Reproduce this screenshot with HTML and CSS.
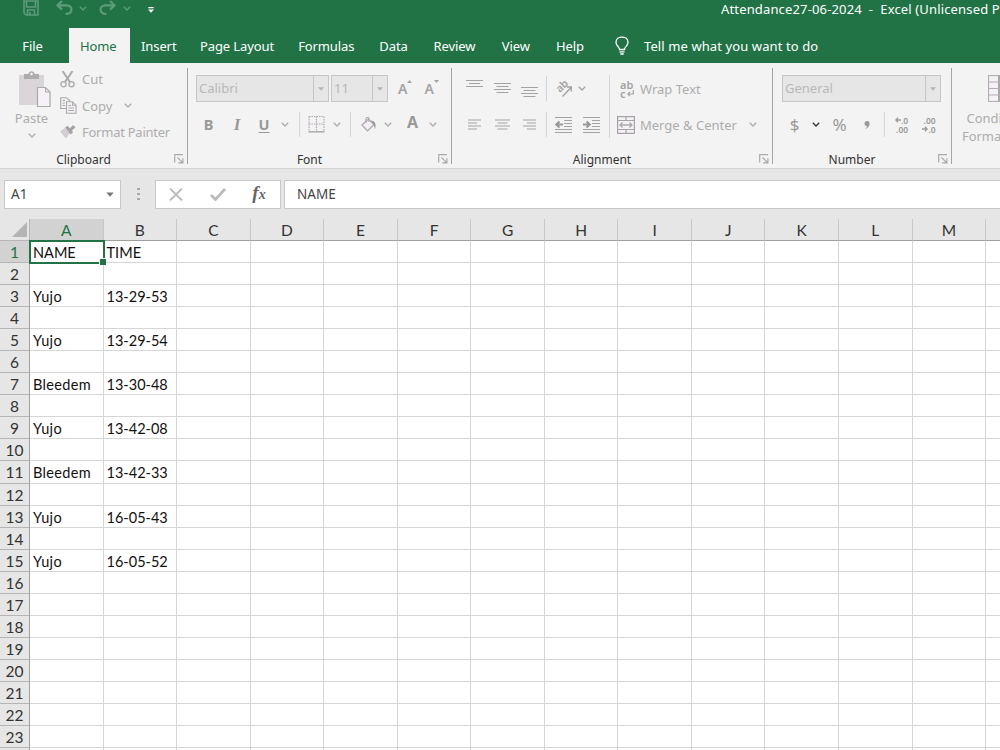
FILE: index.html
```html
<!DOCTYPE html>
<html lang="en">
<head>
    <meta charset="UTF-8">
    <meta name="viewport" content="width=device-width, initial-scale=1.0">
    <title>Attendance27-06-2024 - Excel</title>
    <link rel="stylesheet" href="styles.css">
</head>
<body>

<svg class="defs" width="0" height="0">
    <symbol id="chev" viewBox="0 0 8 5"><path d="M0.8 0.8L4 4L7.2 0.8" fill="none" stroke="currentColor" stroke-width="1.3"/></symbol>
    <symbol id="caret" viewBox="0 0 6 4"><path d="M0 0.3H6L3 3.7Z" fill="currentColor"/></symbol>
    <symbol id="launch" viewBox="0 0 10 10"><path d="M0.7 8.5V0.7H9M3.5 3.5L8.5 8.5M8.9 4.2V8.9H4.2" fill="none" stroke="currentColor" stroke-width="1.2"/></symbol>
</svg>

<header class="titlebar">
    <div class="quick">
        <svg width="16" height="16" viewBox="0 0 16 16"><path d="M1 1H15V15H3L1 13ZM3.5 1V7H12.5V1M4.5 15V10H11.5V15M7 12V15" fill="none" stroke="currentColor" stroke-width="1.6"/></svg>
        <svg width="17" height="16" viewBox="0 0 17 16"><path d="M6 1L1.5 5.3L6 9.6M2 5.3H10.5C17 5.3 17.5 14 9.5 14" fill="none" stroke="currentColor" stroke-width="2.2"/></svg>
        <svg width="8" height="5"><use href="#chev"/></svg>
        <svg width="17" height="16" viewBox="0 0 17 16"><path d="M11 1L15.5 5.3L11 9.6M15 5.3H6.5C-0.5 5.3 0 14 7.5 14" fill="none" stroke="currentColor" stroke-width="2.2"/></svg>
        <svg width="8" height="5"><use href="#chev"/></svg>
        <svg class="more" width="6" height="6" viewBox="0 0 6 6"><path d="M0.3 0H5.7V1.2H0.3ZM0 2.5H6L3 5.8Z" fill="currentColor"/></svg>
    </div>
    <div class="title">Attendance27-06-2024&nbsp; -&nbsp; Excel (Unlicensed Product)</div>
</header>

<nav class="tabs">
    <a class="file">File</a>
    <a class="active">Home</a>
    <a>Insert</a>
    <a>Page Layout</a>
    <a>Formulas</a>
    <a>Data</a>
    <a>Review</a>
    <a>View</a>
    <a>Help</a>
    <svg width="14" height="19" viewBox="0 0 14 19"><path d="M4.5 13.5C4.5 10.5 1 10 1 6.2C1 -0.6 13 -0.6 13 6.2C13 10 9.5 10.5 9.5 13.5ZM4.5 15.8H9.5M5.3 18H8.7" fill="none" stroke="currentColor" stroke-width="1.3"/></svg>
    <span>Tell me what you want to do</span>
</nav>

<section class="ribbon">
    <div class="group clipboard">
        <div class="clip-body">
            <div class="paste">
                <svg width="32" height="37" viewBox="0 0 32 37">
                    <path d="M0 4H25V34H0Z" fill="#d9d5d9"/>
                    <path d="M5 3H9.5C9.5 -0.8 15.5 -0.8 15.5 3H20V8H5Z" fill="#adadad"/>
                    <circle cx="12.5" cy="3" r="1.3" fill="#f3f3f3"/>
                    <path d="M18.5 16.5H26.5L31 21V35.5H18.5Z" fill="#f6f0f7" stroke="#aaa" stroke-width="1.2"/>
                    <path d="M26.5 16.5V21H31" fill="none" stroke="#aaa"/>
                </svg>
                <span>Paste</span>
                <svg width="8" height="5"><use href="#chev"/></svg>
            </div>
            <div class="clip-list">
                <div class="clip-item">
                    <svg width="15" height="17" viewBox="0 0 15 17"><path d="M2.5 0L10.3 11.5M12.5 0L4.7 11.5" stroke="#aaa" stroke-width="2"/><circle cx="3.5" cy="13.3" r="2.6" fill="none" stroke="#aaa" stroke-width="1.3"/><circle cx="11.5" cy="13.3" r="2.6" fill="none" stroke="#aaa" stroke-width="1.3"/></svg>
                    <span>Cut</span>
                </div>
                <div class="clip-item">
                    <svg width="17" height="17" viewBox="0 0 17 17"><path d="M6.5 11.5H0.7V0.7H6.5L9.5 3.5V5M6.5 4.7H12.5L16 8.2V16.3H6.5ZM12.5 4.7V8.2H16M2.5 3.5H5M2.5 6H5M2.5 8.5H5M8.5 8.5H11M8.5 11H14M8.5 13.5H14" fill="#f5f0f6" stroke="#aaa" stroke-width="1.1"/></svg>
                    <span>Copy</span>
                    <svg width="8" height="5"><use href="#chev"/></svg>
                </div>
                <div class="clip-item">
                    <svg width="16" height="14" viewBox="0 0 16 14"><path d="M0 6.5L5 3L9.5 8.5L6 13.5Z" fill="#d3cdd3"/><path d="M5 2.5L7.5 0.8L10 3.2L13 0L15.5 2.3L12 5.5L13 7.5L10.5 9.5Z" fill="#a5a5a5"/></svg>
                    <span class="tight">Format Painter</span>
                </div>
            </div>
        </div>
        <div class="label">Clipboard<svg width="10" height="10"><use href="#launch"/></svg></div>
    </div>
    <div class="divider"></div>

    <div class="group font">
        <div class="font-top">
            <div class="combo"><span>Calibri</span><i><svg width="6" height="4"><use href="#caret"/></svg></i></div>
            <div class="combo"><span>11</span><i><svg width="6" height="4"><use href="#caret"/></svg></i></div>
            <div class="grow">A<svg width="5" height="3" viewBox="0 0 5 3"><path d="M0 3L2.5 0L5 3Z" fill="currentColor"/></svg></div>
            <div class="grow">A<svg width="5" height="3" viewBox="0 0 5 3"><path d="M0 0L2.5 3L5 0Z" fill="currentColor"/></svg></div>
        </div>
        <div class="font-bottom">
            <b>B</b>
            <b class="italic">I</b>
            <b class="underline">U</b>
            <svg width="8" height="5"><use href="#chev"/></svg>
            <div class="line"></div>
            <svg width="17" height="17" viewBox="0 0 17 17"><path d="M1 0.5H16M1 8H16M1 0.5V15M8.5 0.5V15M16 0.5V15" fill="none" stroke="#b5a9b7" stroke-width="1.2" stroke-dasharray="1.5 1"/><path d="M0.5 15.8H16.5" stroke="#aaa" stroke-width="1.5"/></svg>
            <svg width="8" height="5"><use href="#chev"/></svg>
            <div class="line"></div>
            <svg width="16" height="15" viewBox="0 0 16 15"><path d="M1 8L7.5 2L13 7.5L6.5 14Z" fill="#f5eef6" stroke="#aaa" stroke-width="1.2"/><path d="M5 6V2C5 0 8 0 8 2V5" fill="none" stroke="#aaa" stroke-width="1.2"/><path d="M9.5 3.5C14 3.5 15.5 7 14 12.5C13.5 10 13 8 11.5 6Z" fill="#999"/></svg>
            <svg width="8" height="5"><use href="#chev"/></svg>
            <b class="color">A</b>
            <svg width="8" height="5"><use href="#chev"/></svg>
        </div>
        <div class="label">Font<svg width="10" height="10"><use href="#launch"/></svg></div>
    </div>
    <div class="divider"></div>

    <div class="group alignment">
        <div class="align-body">
            <div class="align-row">
                <svg width="17" height="18" viewBox="0 0 17 18"><path d="M0 0.5H17M3 3.5H14M0 6.5H17" stroke="currentColor"/></svg>
                <svg width="17" height="18" viewBox="0 0 17 18"><path d="M0 3.5H17M2.5 6.5H14.5M0 9.5H17M2.5 12.5H14.5" stroke="currentColor"/></svg>
                <svg width="17" height="18" viewBox="0 0 17 18"><path d="M0 7.5H17M2.5 10.5H14.5M0 13.5H17M2.5 16.5H14.5" stroke="currentColor"/></svg>
                <div class="line"></div>
                <svg class="orient" width="18" height="18" viewBox="0 0 18 18"><text x="5" y="13" transform="rotate(-45 5 13)">ab</text><path d="M7.5 16.5L16 7.5M16.3 11.5V7H11.8" fill="none" stroke="currentColor" stroke-width="1.4"/></svg>
                <svg width="8" height="5"><use href="#chev"/></svg>
            </div>
            <div class="line tall"></div>
            <div class="wrap">
                <div class="wrap-icon"><span>ab</span><span>c<svg width="7" height="7" viewBox="0 0 7 7"><path d="M6.3 0V4H1M3 1.8L0.8 4L3 6.2" fill="none" stroke="currentColor" stroke-width="1.2"/></svg></span></div>
                <span>Wrap Text</span>
            </div>
            <div class="align-row">
                <svg width="13" height="11" viewBox="0 0 13 11"><path d="M0 1H13M0 4H9M0 7H13M0 10H9" stroke="currentColor"/></svg>
                <svg width="15" height="11" viewBox="0 0 15 11"><path d="M0 1H15M2.5 4H12.5M0 7H15M2.5 10H12.5" stroke="currentColor"/></svg>
                <svg width="13" height="11" viewBox="0 0 13 11"><path d="M0 1H13M4 4H13M0 7H13M4 10H13" stroke="currentColor"/></svg>
                <div class="line"></div>
                <svg width="17" height="16" viewBox="0 0 17 16"><path d="M0 0.5H17M9 3.5H17M9 6.5H17M9 9.5H17M0 12.5H17M0 15.5H17" stroke="currentColor"/><path d="M8 7.5H1.5M4.5 4.5L1.2 7.5L4.5 10.5" fill="none" stroke="#999" stroke-width="2"/></svg>
                <svg width="17" height="16" viewBox="0 0 17 16"><path d="M0 0.5H17M9 3.5H17M9 6.5H17M9 9.5H17M0 12.5H17M0 15.5H17" stroke="currentColor"/><path d="M0 7.5H6.5M3.5 4.5L6.8 7.5L3.5 10.5" fill="none" stroke="#999" stroke-width="2"/></svg>
            </div>
            <div class="merge">
                <svg width="18" height="18" viewBox="0 0 18 18"><path d="M0.6 0.6H17.4V17.4H0.6ZM0.6 4.5H17.4M0.6 13.5H17.4M9 0.6V4.5M9 13.5V17.4" fill="none" stroke="#aaa0ac" stroke-width="1.2"/><path d="M3 9H15M5.5 6.5L3 9L5.5 11.5M12.5 6.5L15 9L12.5 11.5" fill="none" stroke="#aaa" stroke-width="1.3"/></svg>
                <span>Merge &amp; Center</span>
                <svg width="8" height="5"><use href="#chev"/></svg>
            </div>
        </div>
        <div class="label">Alignment<svg width="10" height="10"><use href="#launch"/></svg></div>
    </div>
    <div class="divider"></div>

    <div class="group number">
        <div class="number-top">
            <div class="combo"><span>General</span><i><svg width="6" height="4"><use href="#caret"/></svg></i></div>
        </div>
        <div class="number-bottom">
            <span class="sign">$</span>
            <svg class="dark" width="8" height="5"><use href="#chev"/></svg>
            <span class="sign">%</span>
            <svg width="6" height="8" viewBox="0 0 6 8"><path d="M3 0A2.5 2.5 0 0 1 5.5 2.8C5.5 5.5 3.5 7.5 1 8C2.2 7 3 6 3 5A2.5 2.5 0 0 1 3 0Z" fill="#999"/></svg>
            <div class="line"></div>
            <div class="decimal"><span><svg width="6" height="6" viewBox="0 0 6 6"><path d="M6 3H1M3 0.8L0.8 3L3 5.2" fill="none" stroke="currentColor" stroke-width="1.3"/></svg>.0</span><span>.00</span></div>
            <div class="decimal"><span>.00</span><span><svg width="6" height="6" viewBox="0 0 6 6"><path d="M0 3H5M3 0.8L5.2 3L3 5.2" fill="none" stroke="currentColor" stroke-width="1.3"/></svg>.0</span></div>
        </div>
        <div class="label">Number<svg width="10" height="10"><use href="#launch"/></svg></div>
    </div>
    <div class="divider"></div>

    <div class="conditional">
        <svg width="26" height="27" viewBox="0 0 26 27"><rect x="0.6" y="0.6" width="24.8" height="25.8" fill="#f6f0f7" stroke="#aaa"/><path d="M10 0.6H18V26.4H10Z" fill="#a8a8a8"/><path d="M0.6 7H25M0.6 13.5H25M0.6 20H25" stroke="#b5adb5"/></svg>
        <span class="first">Conditional</span>
        <span>Formatting</span>
    </div>
</section>

<section class="formula-bar">
    <div class="name-box">A1<svg width="8" height="5" viewBox="0 0 6 4"><use href="#caret"/></svg></div>
    <div class="dots"><i></i><i></i><i></i></div>
    <div class="fx-box">
        <svg width="14" height="13" viewBox="0 0 14 13"><path d="M1 0.5L13 12.5M13 0.5L1 12.5" stroke="#bbb" stroke-width="1.9"/></svg>
        <svg width="16" height="13" viewBox="0 0 16 13"><path d="M1 7L5.5 11.5L15 1" fill="none" stroke="#bbb" stroke-width="2.8"/></svg>
        <span class="fx">f<small>x</small></span>
    </div>
    <div class="formula">NAME</div>
</section>

<main class="sheet" id="sheet"></main>

<script>
    const columns = ['A', 'B', 'C', 'D', 'E', 'F', 'G', 'H', 'I', 'J', 'K', 'L', 'M', ''];
    const rowCount = 24;
    const records = {
        1: ['NAME', 'TIME'],
        3: ['Yujo', '13-29-53'],
        5: ['Yujo', '13-29-54'],
        7: ['Bleedem', '13-30-48'],
        9: ['Yujo', '13-42-08'],
        11: ['Bleedem', '13-42-33'],
        13: ['Yujo', '16-05-43'],
        15: ['Yujo', '16-05-52']
    };
    const sheet = document.getElementById('sheet');

    function addCell(className, text) {
        const cell = document.createElement('div');
        cell.className = className;
        cell.textContent = text || '';
        sheet.appendChild(cell);
    }

    addCell('corner');
    columns.forEach((name, i) => addCell(i === 0 ? 'col-head selected' : 'col-head', name));

    for (let row = 1; row <= rowCount; row++) {
        // the last row only shows its top edge
        addCell(row === 1 ? 'row-head selected' : 'row-head', row < rowCount ? row : '');
        columns.forEach((name, i) => {
            const values = records[row] || [];
            let className = i === 0 ? 'cell name' : 'cell';
            if (row === 1 && i === 0) className = 'cell current';
            addCell(className, values[i]);
        });
    }
</script>

</body>
</html>
```

FILE: styles.css
```css
* {
    box-sizing: border-box;
}
body {
    margin: 0;
    width: 1000px;
    height: 750px;
    overflow: hidden;
    background: #fff;
    font-family: "Noto Sans", "Open Sans", sans-serif;
    font-size: 13px;
    color: #222;
}
svg {
    display: block;
    flex: none;
}
.defs {
    position: absolute;
}

/* title bar and tabs */
.titlebar {
    display: grid;
    grid-template-columns: 721px 279px;
    height: 28px;
    background: #217346;
    color: #fff;
    overflow: hidden;
}
.quick {
    display: grid;
    grid-template-columns: 33px 23px 20px 24px 25px 6px;
    align-items: center;
    height: 15px;
    padding-left: 23px;
    color: #5c9b78;
}
.quick .more {
    color: #fff;
    margin-top: 3px;
}
.title {
    white-space: nowrap;
    line-height: 18px;
    letter-spacing: 0.15px;
    overflow: hidden;
}
.tabs {
    display: grid;
    grid-template-columns: 69px 60.5px 58.5px 98px 80.5px 54px 68px 54.5px 54px 47px 1fr;
    align-items: center;
    height: 35px;
    background: #217346;
    color: #fff;
    white-space: nowrap;
}
.tabs a {
    text-align: center;
    line-height: 36px;
    height: 35px;
    letter-spacing: -0.1px;
}
.tabs .file {
    padding-right: 4px;
}
.tabs .active {
    padding-right: 2px;
    background: #f3f3f3;
    color: #217346;
}
.tabs svg {
    margin-left: 18px;
}
.tabs span {
    letter-spacing: 0.1px;
}

/* ribbon */
.ribbon {
    display: flex;
    height: 105.5px;
    background: #f3f3f3;
    border-bottom: 1px solid #d2d2d2;
    color: #adadad;
    overflow: hidden;
}
.divider {
    flex: none;
    width: 1px;
    margin: 5px 0 4px;
    background: #a5a5a5;
}
.group {
    flex: none;
    display: grid;
    grid-template-rows: 51px 21px 16px 17px;
}
.clipboard {
    width: 187px;
}
.font {
    width: 263px;
}
.alignment {
    width: 320px;
}
.number {
    width: 178px;
}
.label {
    grid-row: 4;
    display: grid;
    grid-template-columns: 1fr 10px;
    align-items: center;
    padding-right: 3px;
    font-size: 12px;
    line-height: 17px;
    text-align: center;
    text-indent: -7px;
    color: #333;
}
.label svg {
    margin-top: -1px;
    color: #aaa;
}
.clip-body {
    grid-row: 1 / 4;
    display: flex;
}
.paste {
    display: flex;
    flex-direction: column;
    align-items: center;
    width: 60px;
    padding-top: 8px;
}
.paste svg:first-child {
    margin-left: 10px;
}
.paste span {
    margin-left: 3px;
    line-height: 20px;
}
.paste svg:last-child {
    margin: 5px 0 0 3px;
}
.clip-list {
    padding-top: 3px;
}
.clip-item {
    display: grid;
    grid-template-columns: 17px auto 8px;
    justify-content: start;
    align-items: center;
    column-gap: 5px;
    height: 26.5px;
    white-space: nowrap;
}
.clip-item > svg:last-child {
    margin-left: 7px;
}
.tight {
    letter-spacing: -0.25px;
}
.combo {
    display: flex;
    justify-content: space-between;
    height: 27px;
    border: 1px solid #c6c6c6;
    background: #e6e6e6;
    line-height: 25px;
    padding-left: 2px;
    color: #b8b8b8;
}
.combo i {
    display: grid;
    place-items: center;
    width: 15px;
    border-left: 1px solid #c6c6c6;
    color: #b4b4b4;
}
.line {
    width: 1px;
    height: 25px;
    margin: -2px 0;
    background: #d5d5d5;
}
.font-top {
    display: grid;
    grid-template-columns: 133px 59px 26.5px 27px;
    align-items: center;
    padding-left: 8px;
}
.font-top .combo:nth-child(2) {
    margin-left: 2px;
}
.grow {
    display: flex;
    padding-left: 10px;
    font-size: 14px;
    font-weight: 600;
    line-height: 18px;
    color: #a3a3a3;
}
.font-bottom {
    display: grid;
    grid-template-columns: 27px 30px 24px 18px 11px 23px 18px 9px 28px 10px 35px 10px;
    grid-template-rows: 21px;
    place-items: center;
    padding-left: 7px;
}
.font-bottom b {
    font-size: 14.5px;
    line-height: 19px;
    padding-bottom: 1px;
    color: #999;
}
.font-bottom .italic {
    font-family: "Liberation Serif", serif;
    font-style: italic;
    font-size: 17px;
}
.font-bottom .underline {
    text-decoration: underline;
    text-underline-offset: 2px;
}
.font-bottom .color {
    padding: 0 0 4px 4px;
    font-size: 16px;
}
.align-body {
    grid-row: 1 / 3;
    display: grid;
    grid-template-columns: 153px 8px 159px;
    grid-template-rows: 51px 21px;
}
.align-row {
    display: grid;
    grid-template-columns: 28px 28px 27px 7px 27px 28px;
    place-items: center;
    padding-left: 8px;
    color: #a3a3a3;
}
.align-row:first-child {
    grid-template-columns: 28px 28px 27px 7px 27px 9px;
    justify-content: start;
}
.tall {
    grid-row: 1 / 3;
    grid-column: 2;
    height: 63px;
    margin: 12px 0 0 4px;
}
.orient {
    overflow: visible;
    font-size: 10.5px;
    font-weight: 600;
    fill: #a3a3a3;
}
.wrap, .merge {
    grid-column: 3;
    display: flex;
    align-items: center;
    white-space: nowrap;
    gap: 5px;
}
.wrap {
    padding-left: 7px;
}
.merge {
    padding-left: 4px;
}
.merge svg:last-child {
    margin-left: 7px;
}
.wrap-icon {
    width: 15px;
    font-size: 11px;
    font-weight: 600;
    line-height: 9px;
    color: #a3a3a3;
}
.wrap-icon span {
    display: flex;
    align-items: center;
    gap: 1px;
}
.number-top {
    padding: 12px 10px 0 9px;
}
.number-bottom {
    display: grid;
    grid-template-columns: 21px 21px 27px 28px 7px 27px 28px;
    grid-template-rows: 21px;
    place-items: center;
    padding-left: 11px;
}
.sign {
    font-size: 17px;
    line-height: 20px;
    color: #999;
}
.dark {
    color: #333;
}
.decimal {
    display: grid;
    justify-items: end;
    font-size: 8.5px;
    font-weight: 600;
    line-height: 9px;
    color: #999;
}
.decimal span {
    display: flex;
    align-items: center;
}
.conditional {
    flex: none;
    display: flex;
    flex-direction: column;
    align-items: center;
    width: 88px;
    padding-top: 12px;
    line-height: 18px;
}
.conditional svg {
    margin: 0 0 7px 9px;
}
.conditional .first {
    margin-left: 11px;
}

/* formula bar */
.formula-bar {
    display: grid;
    grid-template-columns: 117px 34px 126px 1fr;
    height: 50.5px;
    padding: 11.5px 0 10.5px 4px;
    background: #e6e6e6;
    font-size: 13.5px;
    color: #444;
}
.name-box, .fx-box, .formula {
    background: #fff;
    border: 1px solid #c8c8c8;
}
.name-box {
    display: flex;
    justify-content: space-between;
    align-items: center;
    padding: 0 6px;
}
.name-box svg {
    color: #777;
}
.dots {
    display: grid;
    place-content: center;
    gap: 3px;
}
.dots i {
    width: 3px;
    height: 2px;
    background: #aaa;
}
.fx-box {
    display: grid;
    grid-template-columns: 40px 44px 38px;
    place-items: center;
}
.fx {
    font-family: "Liberation Serif", serif;
    font-style: italic;
    font-weight: bold;
    font-size: 19px;
    line-height: 22px;
    color: #666;
}
.fx small {
    font-size: 14px;
}
.formula {
    margin-left: 3px;
    padding-left: 12px;
    line-height: 26px;
    border-right: 0;
}

/* sheet */
.sheet {
    display: grid;
    width: 1000px;
    height: 531px;
    overflow: hidden;
    grid-template-columns: 30px repeat(14, 73.55px);
    grid-template-rows: 22px repeat(24, 22.05px);
    font-family: Lato, sans-serif;
    font-size: 14.5px;
    line-height: 23px;
    color: #111;
}
.corner, .col-head, .row-head {
    background: #e6e6e6;
    border-right: 1px solid #b5b5b5;
    border-bottom: 1px solid #b5b5b5;
    text-align: center;
}
.corner::after {
    content: "";
    display: block;
    width: 15px;
    height: 15px;
    margin: 3px 0 0 12px;
    background: #b4b4b4;
    clip-path: polygon(100% 0, 100% 100%, 0 100%);
}
.col-head, .row-head {
    font-size: 15.5px;
    line-height: 22px;
    color: #333;
}
.row-head {
    border-right-color: #9f9f9f;
}
.col-head {
    border-right-color: #c8c8c8;
    border-bottom-color: #9f9f9f;
}
.col-head.selected, .row-head.selected {
    background: #d2d2d2;
    color: #217346;
}
.cell {
    padding-left: 3px;
    border-right: 1px solid #d6d6d6;
    border-bottom: 1px solid #d6d6d6;
    white-space: nowrap;
}
.name {
    letter-spacing: 0.35px;
}
.current {
    position: relative;
    z-index: 1;
    outline: 2px solid #217346;
    outline-offset: -1px;
}
.current::after {
    content: "";
    position: absolute;
    right: -3px;
    bottom: -3px;
    width: 6px;
    height: 6px;
    background: #217346;
    border: 1px solid #fff;
    border-width: 1px 0 0 1px;
}
```
